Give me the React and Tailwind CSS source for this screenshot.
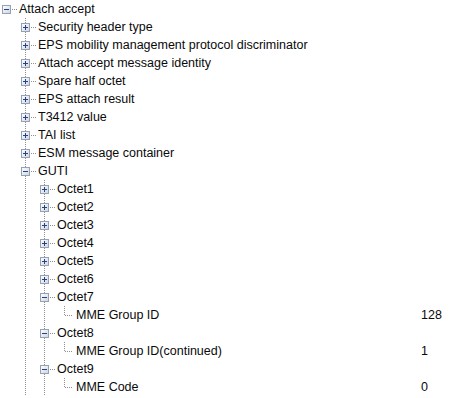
import React from 'react';

const rows = [
  { label: 'Attach accept', depth: 0, kind: 'open', last: true },
  { label: 'Security header type', depth: 1, kind: 'closed' },
  { label: 'EPS mobility management protocol discriminator', depth: 1, kind: 'closed' },
  { label: 'Attach accept message identity', depth: 1, kind: 'closed' },
  { label: 'Spare half octet', depth: 1, kind: 'closed' },
  { label: 'EPS attach result', depth: 1, kind: 'closed' },
  { label: 'T3412 value', depth: 1, kind: 'closed' },
  { label: 'TAI list', depth: 1, kind: 'closed' },
  { label: 'ESM message container', depth: 1, kind: 'closed' },
  { label: 'GUTI', depth: 1, kind: 'open' },
  { label: 'Octet1', depth: 2, kind: 'closed' },
  { label: 'Octet2', depth: 2, kind: 'closed' },
  { label: 'Octet3', depth: 2, kind: 'closed' },
  { label: 'Octet4', depth: 2, kind: 'closed' },
  { label: 'Octet5', depth: 2, kind: 'closed' },
  { label: 'Octet6', depth: 2, kind: 'closed' },
  { label: 'Octet7', depth: 2, kind: 'open' },
  { label: 'MME Group ID', depth: 3, kind: 'leaf', value: '128' },
  { label: 'Octet8', depth: 2, kind: 'open' },
  { label: 'MME Group ID(continued)', depth: 3, kind: 'leaf', value: '1' },
  { label: 'Octet9', depth: 2, kind: 'open' },
  { label: 'MME Code', depth: 3, kind: 'leaf', value: '0' },
];

const LINE = '#8f8f8f';

// vertical guide for an ancestor level that keeps going
function Guide({ on }) {
  return (
    <svg width="19" height="18" className="shrink-0" shapeRendering="crispEdges">
      {on && <line x1="6.5" y1="0" x2="6.5" y2="18" stroke={LINE} strokeDasharray="1 1" />}
    </svg>
  );
}

function Node({ kind, depth }) {
  if (kind === 'leaf') {
    return (
      <svg width="19" height="18" className="shrink-0" shapeRendering="crispEdges">
        <line x1="7.5" y1="0" x2="7.5" y2="9" stroke={LINE} strokeDasharray="1 1" />
        <line x1="8" y1="9.5" x2="16" y2="9.5" stroke={LINE} strokeDasharray="1 1" />
      </svg>
    );
  }
  const open = kind === 'open';
  const id = `g${depth}`;
  return (
    <svg width="19" height="18" className="shrink-0" shapeRendering="crispEdges">
      <defs>
        <linearGradient id={id} x1="0" y1="0" x2="1" y2="1">
          <stop offset="0" stopColor="#ffffff" />
          <stop offset="1" stopColor="#cfd5dd" />
        </linearGradient>
      </defs>
      {depth > 0 && (
        <>
          <line x1="6.5" y1="0" x2="6.5" y2="5" stroke={LINE} strokeDasharray="1 1" />
          <line x1="6.5" y1="14" x2="6.5" y2="18" stroke={LINE} strokeDasharray="1 1" />
        </>
      )}
      <line x1="12" y1="9.5" x2="17" y2="9.5" stroke={LINE} strokeDasharray="1 1" />
      <rect x="2.5" y="5.5" width="8" height="8" fill={`url(#${id})`} stroke="#95a2b3" />
      <line x1="4" y1="9.5" x2="9" y2="9.5" stroke="#23418c" />
      {!open && <line x1="6.5" y1="7" x2="6.5" y2="12" stroke="#23418c" />}
    </svg>
  );
}

function Row({ row }) {
  const guides = [];
  for (let k = 0; k < row.depth; k++) {
    guides.push(<Guide key={k} on={k > 0} />);
  }
  return (
    <div className="flex h-[18px] items-center">
      <div className="flex w-[421px] shrink-0 items-center">
        {guides}
        <Node kind={row.kind} depth={row.depth} />
        <span className="whitespace-nowrap">{row.label}</span>
      </div>
      {row.value && <span>{row.value}</span>}
    </div>
  );
}

export default function App() {
  return (
    <div
      className="h-[398px] w-[474px] overflow-hidden bg-white text-[12.5px] leading-[18px] text-[#0a0a0a]"
      style={{ fontFamily: '"Liberation Sans", Arial, sans-serif' }}
    >
      {rows.map((row, i) => (
        <Row key={i} row={row} />
      ))}
    </div>
  );
}
